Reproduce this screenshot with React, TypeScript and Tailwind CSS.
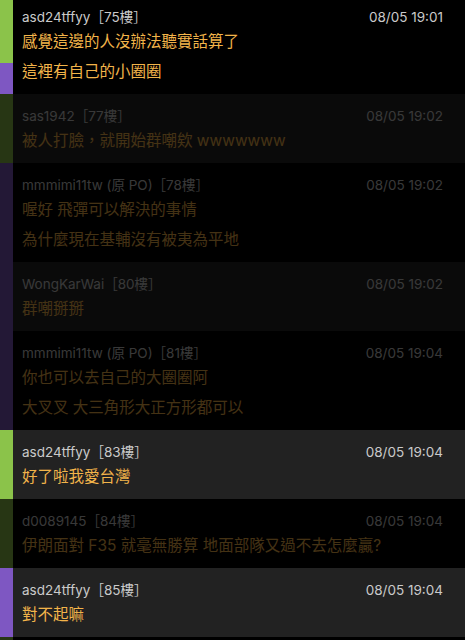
type Reply = {
  user: string;
  floor: string;
  time: string;
  lines: string[];
  bg: string;
  bars: string[];
  dim?: boolean;
  first?: boolean;
};

const GREEN = "bg-[#8bc34a]";
const PURPLE = "bg-[#7e57c2]";

const replies: Reply[] = [
  {
    user: "asd24tffyy",
    floor: "75",
    time: "08/05 19:01",
    lines: ["感覺這邊的人沒辦法聽實話算了", "這裡有自己的小圈圈"],
    bg: "bg-black",
    bars: [GREEN, PURPLE],
    first: true,
  },
  {
    user: "sas1942",
    floor: "77",
    time: "08/05 19:02",
    lines: ["被人打臉，就開始群嘲欸 wwwwwww"],
    bg: "bg-[#262626]",
    bars: [GREEN],
    dim: true,
  },
  {
    user: "mmmimi11tw (原 PO)",
    floor: "78",
    time: "08/05 19:02",
    lines: ["喔好 飛彈可以解決的事情", "為什麼現在基輔沒有被夷為平地"],
    bg: "bg-black",
    bars: [PURPLE],
    dim: true,
  },
  {
    user: "WongKarWai",
    floor: "80",
    time: "08/05 19:02",
    lines: ["群嘲掰掰"],
    bg: "bg-[#262626]",
    bars: [PURPLE],
    dim: true,
  },
  {
    user: "mmmimi11tw (原 PO)",
    floor: "81",
    time: "08/05 19:04",
    lines: ["你也可以去自己的大圈圈阿", "大叉叉 大三角形大正方形都可以"],
    bg: "bg-black",
    bars: [PURPLE],
    dim: true,
  },
  {
    user: "asd24tffyy",
    floor: "83",
    time: "08/05 19:04",
    lines: ["好了啦我愛台灣"],
    bg: "bg-[#222222]",
    bars: [GREEN],
  },
  {
    user: "d0089145",
    floor: "84",
    time: "08/05 19:04",
    lines: ["伊朗面對 F35 就毫無勝算 地面部隊又過不去怎麼贏?"],
    bg: "bg-black",
    bars: [GREEN],
    dim: true,
  },
  {
    user: "asd24tffyy",
    floor: "85",
    time: "08/05 19:04",
    lines: ["對不起嘛"],
    bg: "bg-[#222222]",
    bars: [PURPLE],
  },
];

function Row({ r }: { r: Reply }) {
  return (
    <div className={`flex ${r.bg} ${r.dim ? "opacity-[0.28]" : ""}`}>
      <div className="flex w-[13px] shrink-0 flex-col">
        {r.bars.map((b, i) => (
          <div key={i} className={`${b} ${i === 0 && r.bars.length > 1 ? "h-[63px]" : "flex-1"}`} />
        ))}
      </div>
      <div className={`min-w-0 flex-1 pl-[9px] pr-[22px] pb-[7px] ${r.first ? "pt-[7px]" : "pt-[12px]"}`}>
        <div className="flex h-[20px] items-center justify-between text-[13.5px] text-[#cacaca]">
          <span>
            {r.user}
            <span>［{r.floor}樓］</span>
          </span>
          <span>{r.time}</span>
        </div>
        {r.lines.map((l, i) => (
          <div key={i} className="truncate text-[15.5px] leading-[30px] text-[#f2b44a]">
            {l}
          </div>
        ))}
      </div>
    </div>
  );
}

export default function App() {
  return (
    <main
      className="h-[640px] w-[465px] overflow-hidden bg-black"
      style={{ fontFamily: 'Inter, "Noto Sans CJK TC", sans-serif' }}
    >
      {replies.map((r, i) => (
        <Row key={i} r={r} />
      ))}
      <div className="flex h-[10px] bg-black">
        <div className="w-[13px] bg-[#8bc34a] opacity-[0.28]" />
      </div>
    </main>
  );
}
